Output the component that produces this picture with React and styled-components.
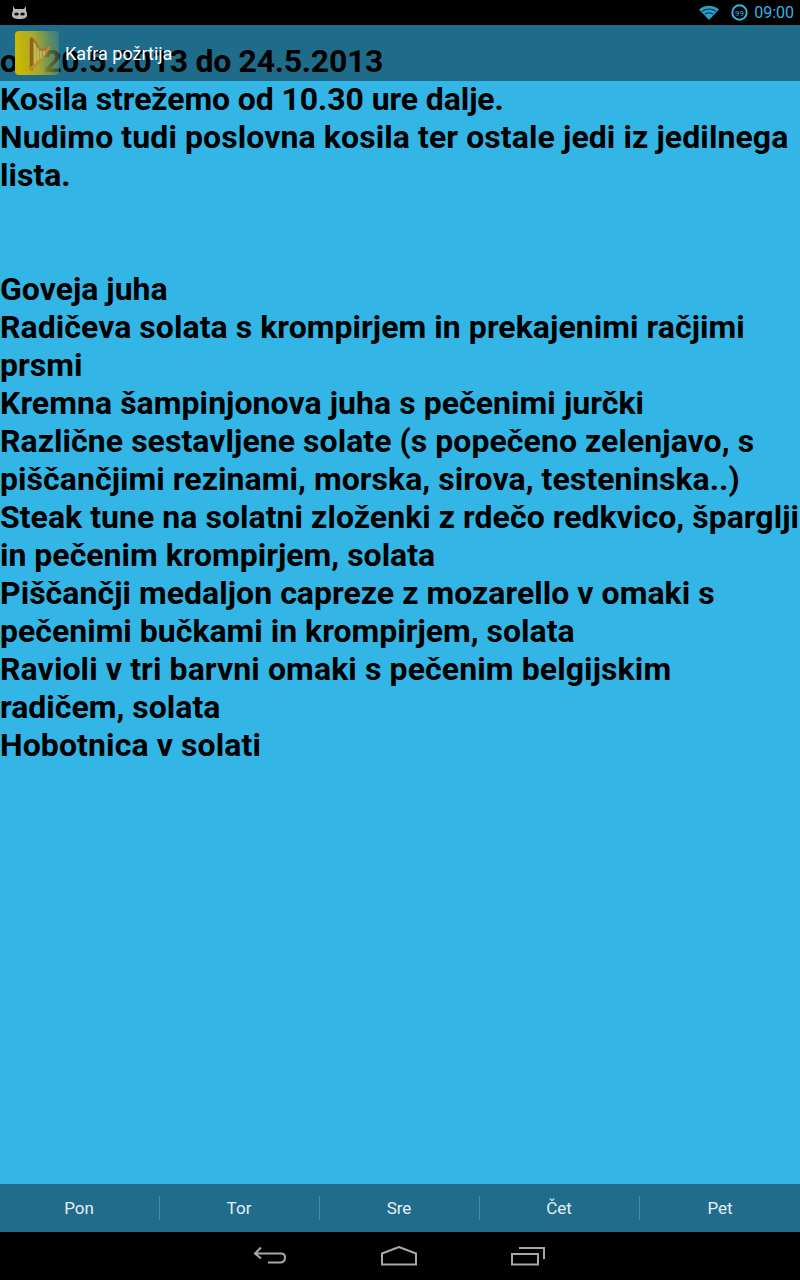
import React from 'react';
import styled, { createGlobalStyle } from 'styled-components';

const Global = createGlobalStyle`
  html, body { margin: 0; padding: 0; background: #000; }
  #root { width: 800px; height: 1280px; }
`;
const Screen = styled.div`
  width: 800px; height: 1280px; display: flex; flex-direction: column;
  position: relative; overflow: hidden; font-family: Roboto, sans-serif; background: #000;
`;
const StatusBar = styled.div`
  height: 25px; flex: none; display: flex; align-items: center; justify-content: space-between;
  padding: 0 6px 0 11px; background: #000;
`;
const StatusRight = styled.div`display: flex; align-items: center; gap: 11px;`;
const Clock = styled.span`color: #33b5e5; font-size: 16px; margin-left: -5px;`;
const Content = styled.main`
  flex: 1; background: #33b5e5; padding-top: 17px; color: #000;
  font-weight: 700; font-size: 32px; line-height: 38px;
`;
const Line = styled.div`
  min-height: 38px; white-space: nowrap;
  letter-spacing: ${p => p.$spacing}px;
`;
const ActionBar = styled.header`
  position: absolute; left: 0; top: 25px; width: 800px; height: 56px; box-sizing: border-box;
  background: rgba(0,0,0,0.4); display: flex; align-items: center; padding-left: 15px;
`;
const AppIcon = styled.svg`width: 44px; height: 44px; flex: none; margin-top: -1px;`;
const Title = styled.span`color: #fff; font-size: 18px; margin-left: 6px; margin-top: 0;`;
const TabBar = styled.nav`
  height: 48px; flex: none; background: #206c8a; display: flex; align-items: center;
`;
const Tab = styled.div`
  width: 160px; height: 24px; box-sizing: border-box; display: flex; align-items: center; justify-content: center;
  color: #e4f0f4; font-size: 17px; padding-right: ${p => p.$last ? 0 : 1}px;
  border-right: ${p => p.$last ? 'none' : '1px solid #4a8aa3'};
`;
const NavBar = styled.div`
  height: 48px; flex: none; background: #000; display: flex; align-items: center; justify-content: center; gap: 94px;
  padding-right: 3px;
`;

const lines = [
  ['od 20.5.2013 do 24.5.2013', -0.28],
  ['Kosila strežemo od 10.30 ure dalje.', -0.1],
  ['Nudimo tudi poslovna kosila ter ostale jedi iz jedilnega', 0.09],
  ['lista.', 0],
  ['', 0], ['', 0],
  ['Goveja juha', 0],
  ['Radičeva solata s krompirjem in prekajenimi račjimi', 0.05],
  ['prsmi', 0],
  ['Kremna šampinjonova juha s pečenimi jurčki', 0.05],
  ['Različne sestavljene solate (s popečeno zelenjavo, s', 0.05],
  ['piščančjimi rezinami, morska, sirova, testeninska..)', 0.05],
  ['Steak tune na solatni zloženki z rdečo redkvico, šparglji', 0.04],
  ['in pečenim krompirjem, solata', 0],
  ['Piščančji medaljon capreze z mozarello v omaki s', 0.03],
  ['pečenimi bučkami in krompirjem, solata', 0],
  ['Ravioli v tri barvni omaki s pečenim belgijskim', 0.1],
  ['radičem, solata', 0],
  ['Hobotnica v solati', 0.1],
];
const tabs = ['Pon', 'Tor', 'Sre', 'Čet', 'Pet'];

const Android = () => (
  <svg width="17" height="15" viewBox="0 0 17 15">
    <path d="M2 1l2 3h9l2-3 0 5c1 1 1 3 1 4 0 3-3 4-7.500 4S1 13 1 10c0-1 0-3 1-4z" fill="#b9b9b9" />
    <ellipse cx="5.500" cy="9" rx="2.300" ry="1.500" fill="#111" />
    <ellipse cx="11.500" cy="9" rx="2.300" ry="1.500" fill="#111" />
  </svg>
);
const Wifi = () => (
  <svg width="22" height="17" viewBox="0 0 22 17">
    <path d="M1 5.500C7 .5 15 .5 21 5.500L11 16z" fill="#2a9fca" />
    <path d="M4.200 7.200C8 4.500 14 4.500 17.800 7.200" fill="none" stroke="#0a3d50" strokeWidth="1.200" />
    <path d="M6.800 10C9.500 8.500 12.500 8.500 15.200 10" fill="none" stroke="#0a3d50" strokeWidth="1.200" />
  </svg>
);
const Battery = () => (
  <svg width="17" height="17" viewBox="0 0 17 17">
    <circle cx="8.500" cy="8.500" r="7.200" fill="none" stroke="#33b5e5" strokeWidth="2" />
    <text x="8.500" y="11.500" textAnchor="middle" fontSize="8" fontFamily="Roboto, sans-serif" fill="#33b5e5">99</text>
  </svg>
);
const Back = () => (
  <svg width="34" height="20" viewBox="0 0 34 20" fill="none" stroke="#a8a8a8" strokeWidth="2">
    <path d="M8 1.500L2 7.500l6 5M2 7.500h26c3 0 4 2 4 4s-1 5-5 5H15" />
  </svg>
);
const Home = () => (
  <svg width="36" height="20" viewBox="0 0 36 20" fill="none" stroke="#a8a8a8" strokeWidth="2">
    <path d="M1 18.500V7.500L18 1l17 6.500v11z" />
  </svg>
);
const Recent = () => (
  <svg width="34" height="20" viewBox="0 0 34 20" fill="none" stroke="#a8a8a8" strokeWidth="2">
    <rect x="1" y="8" width="26" height="10.500" />
    <path d="M8 2h25v11" />
  </svg>
);
const Harp = () => (
  <AppIcon viewBox="0 0 44 44">
    <defs>
      <linearGradient id="bg" x1="0" x2="1" y1="0.15" y2="0">
        <stop offset="0" stopColor="#c9b902" />
        <stop offset="0.45" stopColor="#b5ad25" stopOpacity="0.9" />
        <stop offset="1" stopColor="#6f9a70" stopOpacity="0.35" />
      </linearGradient>
    </defs>
    <rect width="44" height="44" rx="4" fill="url(#bg)" />
    <g fill="none" strokeLinecap="round">
      <path d="M18 9c4 1 3 5 6 9 2 2 7 0 10-2" stroke="#a9702a" strokeWidth="2.200" />
      <path d="M16.500 8v29" stroke="#8f5f24" strokeWidth="3.400" />
      <path d="M15 37.500c7-3 14-13 19-21" stroke="#c08a35" strokeWidth="2.400" />
      <path d="M20 13v19M23 17v12M26 20v7M29 20v4" stroke="#ead79a" strokeWidth="0.800" />
    </g>
  </AppIcon>
);

export default function App() {
  return (
    <Screen>
      <Global />
      <StatusBar>
        <Android />
        <StatusRight>
          <Wifi />
          <Battery />
          <Clock>09:00</Clock>
        </StatusRight>
      </StatusBar>
      <Content>
        {lines.map(([l, s], i) => <Line key={i} $spacing={s}>{l}</Line>)}
      </Content>
      <ActionBar>
        <Harp />
        <Title>Kafra požrtija</Title>
      </ActionBar>
      <TabBar>
        {tabs.map((t, i) => <Tab key={t} $last={i === tabs.length - 1}>{t}</Tab>)}
      </TabBar>
      <NavBar>
        <Back />
        <Home />
        <Recent />
      </NavBar>
    </Screen>
  );
}
